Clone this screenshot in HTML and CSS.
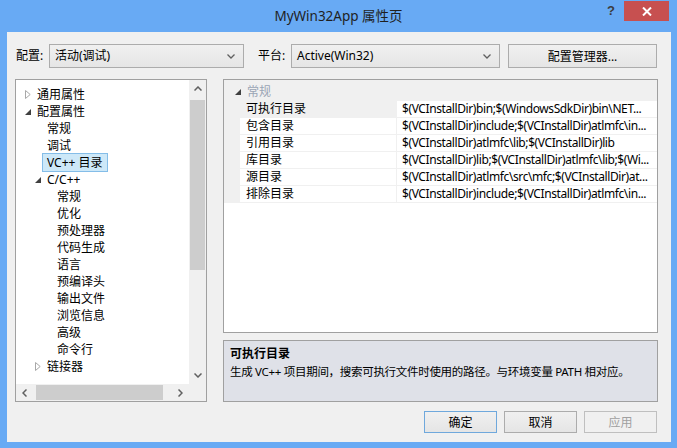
FILE: index.html
```html
<!DOCTYPE html>
<html lang="zh-CN">
<head>
<meta charset="utf-8">
<title>MyWin32App 属性页</title>
<link rel="stylesheet" href="styles.css">
</head>
<body>
<div class="window">
  <div class="titlebar">
    <div class="tb-spacer"></div>
    <div class="title">MyWin32App 属性页</div>
    <div class="tb-buttons">
      <div class="tb-help">?</div>
      <div class="tb-close">
        <svg width="10" height="9" viewBox="0 0 10 9"><path d="M1 0.5 L9 8.5 M9 0.5 L1 8.5" stroke="#fff" stroke-width="2" fill="none"/></svg>
      </div>
    </div>
  </div>
  <div class="client">
    <div class="toolbar">
      <span class="lbl lbl-config">配置:</span>
      <div class="combo combo-config">
        <span class="combo-text">活动(调试)</span>
        <svg class="chev" width="8" height="5" viewBox="0 0 8 5"><path d="M0.5 0.5 L4 4 L7.5 0.5" stroke="#606060" stroke-width="1.3" fill="none"/></svg>
      </div>
      <span class="lbl lbl-platform">平台:</span>
      <div class="combo combo-platform">
        <span class="combo-text">Active(Win32)</span>
        <svg class="chev" width="8" height="5" viewBox="0 0 8 5"><path d="M0.5 0.5 L4 4 L7.5 0.5" stroke="#606060" stroke-width="1.3" fill="none"/></svg>
      </div>
      <div class="btn btn-mgr">配置管理器...</div>
    </div>

    <div class="main">
      <div class="tree">
        <div class="tree-content">
          <div class="node l0"><span class="twisty"><svg width="6" height="9" viewBox="0 0 6 9"><path d="M0.5 0.5 L5.2 4.5 L0.5 8.5 Z" fill="none" stroke="#a8a8a8"/></svg></span><span>通用属性</span></div>
          <div class="node l0"><span class="twisty"><svg width="6" height="6" viewBox="0 0 6 6"><path d="M6 0 L6 6 L0 6 Z" fill="#404040"/></svg></span><span>配置属性</span></div>
          <div class="node l1"><span class="twisty"></span><span>常规</span></div>
          <div class="node l1"><span class="twisty"></span><span>调试</span></div>
          <div class="node l1"><span class="twisty"></span><span class="sel">VC++ 目录</span></div>
          <div class="node l1"><span class="twisty"><svg width="6" height="6" viewBox="0 0 6 6"><path d="M6 0 L6 6 L0 6 Z" fill="#404040"/></svg></span><span>C/C++</span></div>
          <div class="node l2"><span class="twisty"></span><span>常规</span></div>
          <div class="node l2"><span class="twisty"></span><span>优化</span></div>
          <div class="node l2"><span class="twisty"></span><span>预处理器</span></div>
          <div class="node l2"><span class="twisty"></span><span>代码生成</span></div>
          <div class="node l2"><span class="twisty"></span><span>语言</span></div>
          <div class="node l2"><span class="twisty"></span><span>预编译头</span></div>
          <div class="node l2"><span class="twisty"></span><span>输出文件</span></div>
          <div class="node l2"><span class="twisty"></span><span>浏览信息</span></div>
          <div class="node l2"><span class="twisty"></span><span>高级</span></div>
          <div class="node l2"><span class="twisty"></span><span>命令行</span></div>
          <div class="node l1"><span class="twisty"><svg width="6" height="9" viewBox="0 0 6 9"><path d="M0.5 0.5 L5.2 4.5 L0.5 8.5 Z" fill="none" stroke="#a8a8a8"/></svg></span><span>链接器</span></div>
        </div>
        <div class="vscroll">
          <div class="sb-btn"><svg width="8" height="5" viewBox="0 0 8 5"><path d="M0.5 4.5 L4 1 L7.5 4.5" stroke="#606060" stroke-width="1.5" fill="none"/></svg></div>
          <div class="v-thumb"></div>
          <div class="sb-fill"></div>
          <div class="sb-btn"><svg width="8" height="5" viewBox="0 0 8 5"><path d="M0.5 0.5 L4 4 L7.5 0.5" stroke="#606060" stroke-width="1.5" fill="none"/></svg></div>
        </div>
        <div class="hscroll">
          <div class="sb-btn"><svg width="5" height="8" viewBox="0 0 5 8"><path d="M4.5 0.5 L1 4 L4.5 7.5" stroke="#606060" stroke-width="1.5" fill="none"/></svg></div>
          <div class="h-thumb"></div>
          <div class="sb-fill"></div>
          <div class="sb-btn"><svg width="5" height="8" viewBox="0 0 5 8"><path d="M0.5 0.5 L4 4 L0.5 7.5" stroke="#606060" stroke-width="1.5" fill="none"/></svg></div>
        </div>
        <div class="sb-corner"></div>
      </div>

      <div class="right">
        <div class="grid">
          <div class="pg-rows">
            <div class="pg-cat"><span class="cat-twisty"><svg width="6" height="6" viewBox="0 0 6 6"><path d="M6 0 L6 6 L0 6 Z" fill="#404040"/></svg></span><span>常规</span></div>
            <div class="pg-row"><div class="pg-gut"></div><div class="pg-name selected">可执行目录</div><div class="pg-val">$(VCInstallDir)bin;$(WindowsSdkDir)bin\NET...</div></div>
            <div class="pg-row"><div class="pg-gut"></div><div class="pg-name">包含目录</div><div class="pg-val">$(VCInstallDir)include;$(VCInstallDir)atlmfc\in...</div></div>
            <div class="pg-row"><div class="pg-gut"></div><div class="pg-name">引用目录</div><div class="pg-val">$(VCInstallDir)atlmfc\lib;$(VCInstallDir)lib</div></div>
            <div class="pg-row"><div class="pg-gut"></div><div class="pg-name">库目录</div><div class="pg-val">$(VCInstallDir)lib;$(VCInstallDir)atlmfc\lib;$(Wi...</div></div>
            <div class="pg-row"><div class="pg-gut"></div><div class="pg-name">源目录</div><div class="pg-val">$(VCInstallDir)atlmfc\src\mfc;$(VCInstallDir)at...</div></div>
            <div class="pg-row"><div class="pg-gut"></div><div class="pg-name">排除目录</div><div class="pg-val">$(VCInstallDir)include;$(VCInstallDir)atlmfc\in...</div></div>
          </div>
        </div>
        <div class="desc">
          <div class="desc-title">可执行目录</div>
          <div class="desc-text">生成 VC++ 项目期间，搜索可执行文件时使用的路径。与环境变量 PATH 相对应。</div>
        </div>
      </div>
    </div>

    <div class="buttons">
      <div class="btn dlg-btn default">确定</div>
      <div class="btn dlg-btn">取消</div>
      <div class="btn dlg-btn disabled">应用</div>
    </div>
  </div>
</div>
</body>
</html>
```

FILE: styles.css
```css
* { box-sizing: border-box; }
html, body { margin: 0; padding: 0; }
body {
  width: 677px;
  height: 448px;
  overflow: hidden;
  font-family: "Noto Sans", "Noto Sans CJK SC", sans-serif;
  font-size: 12px;
  color: #000;
  background: #68aaf4;
}
.window {
  width: 677px;
  height: 448px;
  display: flex;
  flex-direction: column;
  background: #68aaf4;
}

/* title bar */
.titlebar { height: 32px; flex: none; display: flex; }
.tb-spacer { width: 79px; flex: none; }
.title {
  flex: 1;
  text-align: center;
  line-height: 32px;
  font-size: 13.5px;
  color: #1f1f1f;
  white-space: nowrap;
}
.tb-buttons { width: 79px; flex: none; display: flex; align-items: flex-start; padding-right: 8px; }
.tb-help {
  width: 26px;
  height: 22px;
  line-height: 22px;
  text-align: center;
  font-weight: bold;
  font-size: 13px;
  color: #3c3c3c;
  font-family: "Liberation Sans", sans-serif;
}
.tb-close {
  width: 45px;
  height: 20px;
  margin-top: 1px;
  background: #c75050;
  display: flex;
  align-items: center;
  justify-content: center;
}

/* client area */
.client {
  flex: 1;
  margin: 0 6px 6px 7px;
  background: #f0f0f0;
  padding: 0 13px 0 8px;
  display: flex;
  flex-direction: column;
}

.toolbar {
  margin-top: 12px;
  height: 24px;
  display: flex;
  padding-right: 1px;
}
.lbl { line-height: 24px; white-space: nowrap; }
.lbl-config { width: 34px; padding-left: 1px; }
.lbl-platform { width: 33px; margin-left: 14px; }
.combo {
  border: 1px solid #acacac;
  background: linear-gradient(#f0f0f0, #e5e5e5);
  display: flex;
  align-items: center;
  justify-content: space-between;
  padding: 0 8px 0 5px;
}
.combo-config { width: 195px; }
.combo-platform { width: 209px; padding-left: 5px; }
.combo-text { line-height: 22px; white-space: nowrap; }
.chev { flex: none; }

.btn {
  border: 1px solid #acacac;
  background: linear-gradient(#f0f0f0, #e5e5e5);
  display: flex;
  align-items: center;
  justify-content: center;
  white-space: nowrap;
}
.btn-mgr { width: 149px; margin-left: 8px; }

/* main area */
.main {
  margin-top: 11px;
  height: 323px;
  display: flex;
  gap: 16px;
}

.tree {
  width: 192px;
  flex: none;
  border: 1px solid #a0a0a0;
  background: #fff;
  display: grid;
  grid-template-columns: 1fr 17px;
  grid-template-rows: 1fr 17px;
}
.tree-content { overflow: hidden; padding-top: 6px; }
.node {
  height: 17px;
  display: flex;
  align-items: center;
  white-space: nowrap;
  line-height: 17px;
}
.l0 { padding-left: 8px; }
.l1 { padding-left: 18px; }
.l2 { padding-left: 28px; }
.twisty {
  width: 13px;
  height: 17px;
  flex: none;
  display: flex;
  align-items: center;
  padding-left: 1px;
}
.sel {
  background: #cde8f8;
  border: 1px solid #84bde8;
  padding: 0 4px;
  margin: -1px 0 -1px -5px;
  line-height: 17px;
}

.vscroll { background: #f0f0f0; display: flex; flex-direction: column; }
.hscroll { background: #f0f0f0; display: flex; }
.sb-btn {
  width: 17px;
  height: 17px;
  flex: none;
  display: flex;
  align-items: center;
  justify-content: center;
}
.sb-fill { flex: 1; }
.v-thumb { height: 170px; margin: 3px 1px 0 1px; background: #cdcdcd; flex: none; }
.h-thumb { width: 127px; margin: 1px 0 1px 3px; background: #cdcdcd; flex: none; }
.sb-corner { background: #f0f0f0; }

/* right column */
.right {
  width: 435px;
  flex: none;
  display: flex;
  flex-direction: column;
  gap: 7px;
}
.grid {
  height: 254px;
  border: 1px solid #a0a0a0;
  background: #fff;
  overflow: hidden;
}
.pg-rows {
  background: #f0f0f0;
  padding: 3px 0 1px 0;
  display: flex;
  flex-direction: column;
  gap: 1px;
}
.pg-cat {
  height: 17px;
  display: flex;
  align-items: center;
  padding-left: 11px;
  color: #9aa5b5;
  line-height: 17px;
}
.cat-twisty { width: 12px; display: flex; align-items: center; }
.pg-row { height: 16px; display: flex; line-height: 16px; }
.pg-gut { width: 16px; flex: none; }
.pg-name {
  width: 156px;
  flex: none;
  background: #fff;
  padding-left: 6px;
  white-space: nowrap;
}
.pg-name.selected { background: #f0f0f0; }
.pg-val {
  flex: 1;
  margin-left: 1px;
  background: #fff;
  padding-left: 5px;
  white-space: nowrap;
  overflow: hidden;
  letter-spacing: -0.4px;
}

.desc {
  height: 62px;
  border: 1px solid #a0a0a0;
  background: #dfe1e8;
  padding: 4px 6px;
  line-height: 18px;
}
.desc-title { font-weight: bold; }
.desc-text { white-space: nowrap; font-size: 11.5px; letter-spacing: -0.3px; }

/* dialog buttons */
.buttons {
  margin-top: 9px;
  height: 22px;
  display: flex;
  justify-content: flex-end;
  gap: 7px;
  padding-right: 1px;
}
.dlg-btn { width: 73px; }
.dlg-btn.default { border-color: #6fa8dc; }
.dlg-btn.disabled { color: #a0a0a0; border-color: #bfbfbf; background: #f0f0f0; }
```
